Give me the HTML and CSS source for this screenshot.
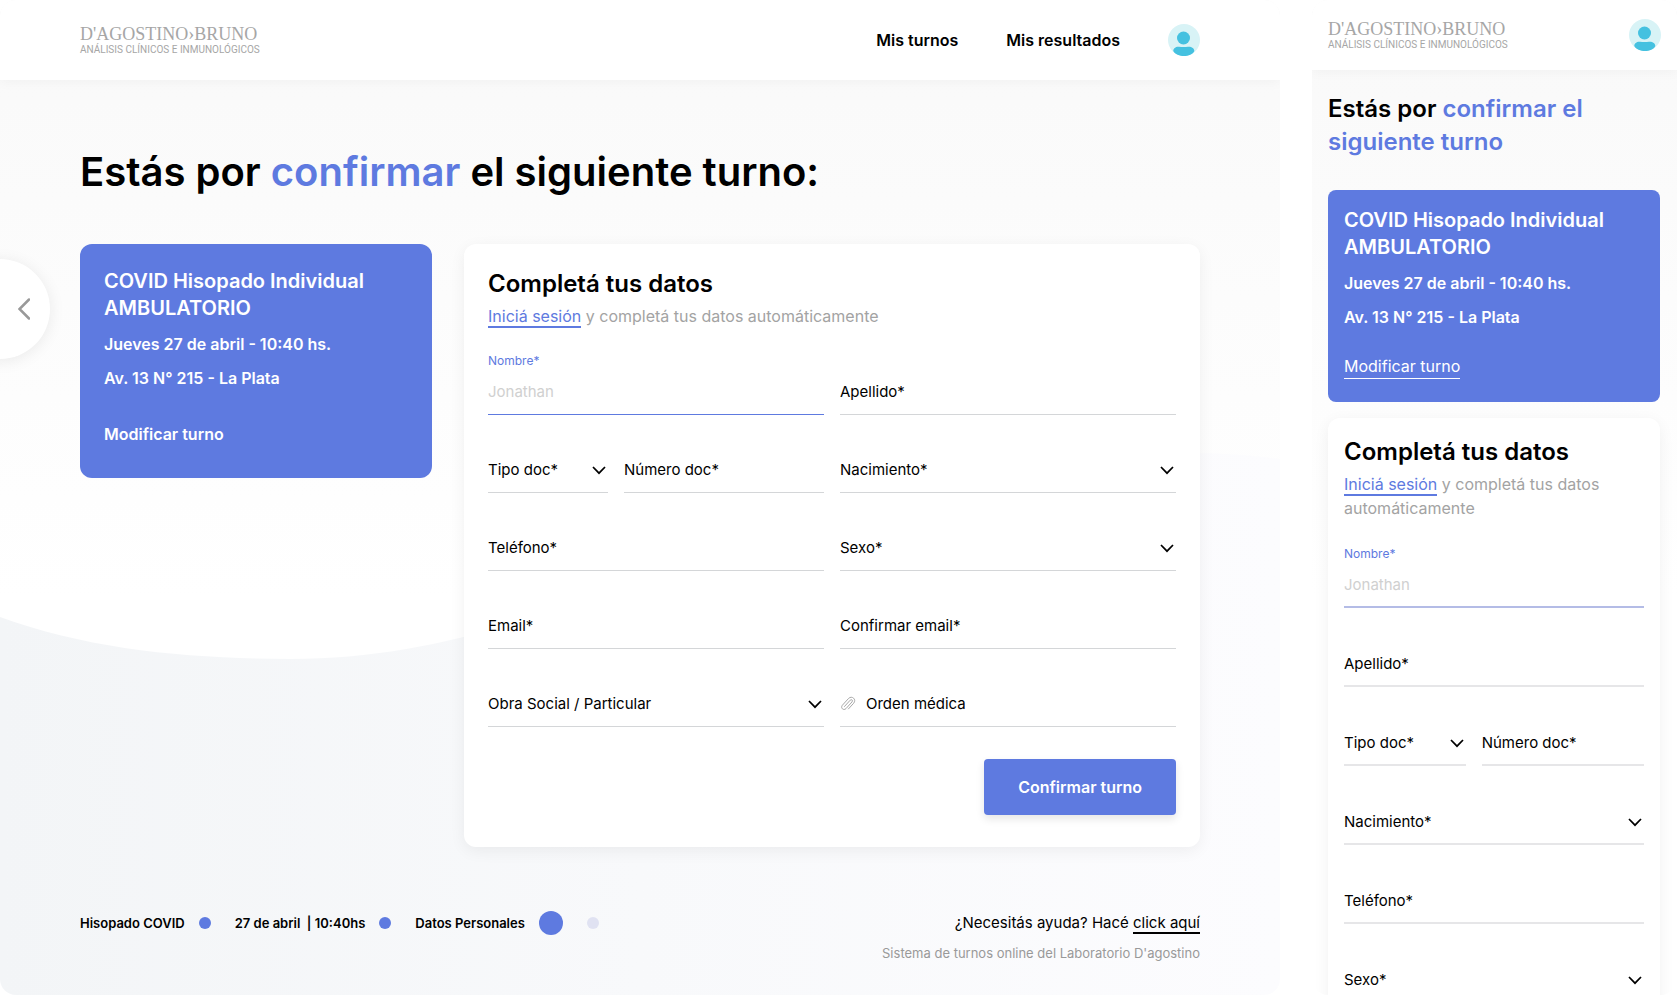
FILE: index.html
```html
<!DOCTYPE html>
<html lang="es">
<head>
  <meta charset="UTF-8">
  <meta name="viewport" content="width=device-width, initial-scale=1.0">
  <title>Confirmar turno</title>
  <link rel="stylesheet" href="styles.css">
</head>
<body>

<svg class="sprite" aria-hidden="true">
  <symbol id="chevron" viewBox="0 0 14 9">
    <path d="M1 1 L7 7.200 L13 1" fill="none" stroke="currentColor" stroke-width="1.700"/>
  </symbol>
  <symbol id="avatar" viewBox="0 0 32 32">
    <circle cx="16" cy="16" r="16" fill="#d8f3f6"/>
    <circle cx="15.500" cy="14" r="6.500" fill="#45c1e0"/>
    <path d="M5.300 27 C5.300 24 8 22.400 11 22.700 C14 23.100 17 23.100 20 22.700 C23.500 22.400 26.300 24 26.300 27 C25 30.500 20.500 32 16 32 C11.500 32 7 30.500 5.300 27 Z" fill="#45c1e0"/>
  </symbol>
  <symbol id="clip" viewBox="0 0 16 16">
    <path d="M4.200 10.800 L10.200 4.200 C11.600 2.800 13.300 4.400 12 5.900 L6 12.600 C3.600 15 0.200 12 2.300 9.300 L8.600 2.400 C12 -0.800 16.800 3.400 13.700 7.200 L8.200 13.200" fill="none" stroke="currentColor" stroke-width="1"/>
  </symbol>
</svg>

<div class="boards">

  <!-- Desktop -->
  <div class="board desktop">
    <svg class="wave" viewBox="0 0 1280 560" preserveAspectRatio="none" aria-hidden="true">
      <defs>
        <linearGradient id="waveFill" x1="0" y1="0" x2="1" y2="0">
          <stop offset="0" stop-color="#f3f5f7"/>
          <stop offset="0.5" stop-color="#f8f9fb"/>
          <stop offset="1" stop-color="#fcfcfe"/>
        </linearGradient>
      </defs>
      <path d="M0 180 C90 213 190 222 290 222 C600 222 760 15 1190 15 C1220 15 1250 17 1280 21 V560 H0 Z" fill="url(#waveFill)"/>
    </svg>

    <header class="header">
      <a href="#" class="logo">
        <span class="logo-name">D'AGOSTINO›BRUNO</span>
        <span class="logo-text">ANÁLISIS CLÍNICOS E INMUNOLÓGICOS</span>
      </a>
      <nav class="nav">
        <a href="#">Mis turnos</a>
        <a href="#">Mis resultados</a>
        <a href="#" class="avatar" aria-label="Mi cuenta"><svg><use href="#avatar"/></svg></a>
      </nav>
    </header>

    <button class="back" aria-label="Volver">
      <svg viewBox="0 0 12 22"><path d="M11 1.500 L1.500 11 L11 20.500" fill="none" stroke="#999" stroke-width="2.500" stroke-linecap="round"/></svg>
    </button>

    <main class="main">
      <h1>Estás por <span>confirmar</span> el siguiente turno:</h1>

      <div class="columns">
        <section class="turno">
          <h2>COVID Hisopado Individual AMBULATORIO</h2>
          <p>Jueves 27 de abril - 10:40 hs.</p>
          <p>Av. 13 N° 215 - La Plata</p>
          <a href="#">Modificar turno</a>
        </section>

        <section class="datos">
          <h2>Completá tus datos</h2>
          <p class="login"><a href="#">Iniciá sesión</a> y completá tus datos automáticamente</p>

          <form class="form">
            <div class="field active">
              <label for="nombre">Nombre*</label>
              <input type="text" id="nombre" placeholder="Jonathan">
            </div>
            <div class="field">
              <input type="text" placeholder="Apellido*" aria-label="Apellido">
            </div>
            <div class="doc">
              <div class="field select">
                <select aria-label="Tipo doc"><option>Tipo doc*</option></select>
                <svg><use href="#chevron"/></svg>
              </div>
              <div class="field">
                <input type="text" placeholder="Número doc*" aria-label="Número doc">
              </div>
            </div>
            <div class="field select">
              <select aria-label="Nacimiento"><option>Nacimiento*</option></select>
              <svg><use href="#chevron"/></svg>
            </div>
            <div class="field">
              <input type="tel" placeholder="Teléfono*" aria-label="Teléfono">
            </div>
            <div class="field select">
              <select aria-label="Sexo"><option>Sexo*</option></select>
              <svg><use href="#chevron"/></svg>
            </div>
            <div class="field">
              <input type="email" placeholder="Email*" aria-label="Email">
            </div>
            <div class="field">
              <input type="email" placeholder="Confirmar email*" aria-label="Confirmar email">
            </div>
            <div class="field select">
              <select aria-label="Obra Social / Particular"><option>Obra Social / Particular</option></select>
              <svg><use href="#chevron"/></svg>
            </div>
            <div class="field">
              <label class="file" for="orden"><svg><use href="#clip"/></svg>Orden médica</label>
              <input type="file" id="orden">
            </div>
            <button type="button" class="submit">Confirmar turno</button>
          </form>
        </section>
      </div>
    </main>

    <footer class="footer">
      <ol class="steps">
        <li>Hisopado COVID <i class="dot"></i></li>
        <li>27 de abril &nbsp;| 10:40hs <i class="dot"></i></li>
        <li>Datos Personales <i class="dot current"></i></li>
        <li><i class="dot next"></i></li>
      </ol>
      <div class="help">
        <p>¿Necesitás ayuda? Hacé <a href="#">click aquí</a></p>
        <small>Sistema de turnos online del Laboratorio D'agostino</small>
      </div>
    </footer>
  </div>

  <!-- Mobile -->
  <div class="board mobile">
    <header class="header">
      <a href="#" class="logo">
        <span class="logo-name">D'AGOSTINO›BRUNO</span>
        <span class="logo-text">ANÁLISIS CLÍNICOS E INMUNOLÓGICOS</span>
      </a>
      <a href="#" class="avatar" aria-label="Mi cuenta"><svg><use href="#avatar"/></svg></a>
    </header>

    <main class="main">
      <h1>Estás por <span>confirmar el siguiente turno</span></h1>

      <section class="turno">
        <h2>COVID Hisopado Individual AMBULATORIO</h2>
        <p>Jueves 27 de abril - 10:40 hs.</p>
        <p>Av. 13 N° 215 - La Plata</p>
        <a href="#">Modificar turno</a>
      </section>

      <section class="datos">
        <h2>Completá tus datos</h2>
        <p class="login"><a href="#">Iniciá sesión</a> y completá tus datos automáticamente</p>

        <form class="form">
          <div class="field active">
            <label for="nombre-m">Nombre*</label>
            <input type="text" id="nombre-m" placeholder="Jonathan">
          </div>
          <div class="field">
            <input type="text" placeholder="Apellido*" aria-label="Apellido">
          </div>
          <div class="doc">
            <div class="field select">
              <select aria-label="Tipo doc"><option>Tipo doc*</option></select>
              <svg><use href="#chevron"/></svg>
            </div>
            <div class="field">
              <input type="text" placeholder="Número doc*" aria-label="Número doc">
            </div>
          </div>
          <div class="field select">
            <select aria-label="Nacimiento"><option>Nacimiento*</option></select>
            <svg><use href="#chevron"/></svg>
          </div>
          <div class="field">
            <input type="tel" placeholder="Teléfono*" aria-label="Teléfono">
          </div>
          <div class="field select">
            <select aria-label="Sexo"><option>Sexo*</option></select>
            <svg><use href="#chevron"/></svg>
          </div>
        </form>
      </section>
    </main>
  </div>

</div>

</body>
</html>
```
FILE: styles.css
```css
* {
  box-sizing: border-box;
}

body {
  margin: 0;
  background: #fff;
  color: #000;
  font-family: Inter, "Open Sans", sans-serif;
  font-size: 16px;
  line-height: 24px;
}

h1, h2, p {
  margin: 0;
}

a {
  color: inherit;
  text-decoration: none;
}

.sprite {
  display: none;
}

.boards {
  display: grid;
  grid-template-columns: minmax(0, 1fr) 365px;
  gap: 32px;
  height: 100vh;
  overflow: hidden;
}

.board {
  position: relative;
  overflow: hidden;
  border-radius: 16px;
  background: linear-gradient(#f9f9f9, #fff 60%);
}

/* Header */
.header {
  position: relative;
  display: flex;
  justify-content: space-between;
  align-items: center;
  height: 80px;
  padding: 0 80px;
  background: #fff;
  box-shadow: 0 2px 12px rgba(0, 0, 0, 0.04);
}

.logo {
  display: flex;
  flex-direction: column;
  color: #a6a6a6;
}

.logo-name {
  font-family: "Liberation Serif", serif;
  font-size: 18px;
  line-height: 20px;
}

.logo-text {
  font-family: Roboto, sans-serif;
  font-size: 10px;
  line-height: 12px;
}

.nav {
  display: flex;
  align-items: center;
  gap: 48px;
  font-weight: 600;
}

.avatar, .avatar svg {
  display: block;
  width: 32px;
  height: 32px;
}

.back {
  position: absolute;
  left: -50px;
  top: 259px;
  width: 100px;
  height: 100px;
  padding: 0 20px 0 0;
  border: none;
  border-radius: 50%;
  background: #fff;
  box-shadow: 0 2px 16px rgba(0, 0, 0, 0.08);
  text-align: right;
  cursor: pointer;
}

.back svg {
  width: 12px;
  height: 22px;
  vertical-align: middle;
}

.wave {
  position: absolute;
  left: 0;
  bottom: 0;
  width: 100%;
  height: 56%;
}

/* Content */
.main {
  position: relative;
  padding: 64px 80px 0;
}

h1 {
  margin-bottom: 44px;
  font-size: 40px;
  font-weight: 600;
  line-height: 56px;
}

h1 span {
  color: #5e7ae0;
}

.columns {
  display: grid;
  grid-template-columns: 352px minmax(0, 1fr);
  align-items: start;
  gap: 32px;
}

.turno {
  padding: 24px 24px 32px;
  border-radius: 12px;
  background: #5e7ae0;
  color: #fff;
  font-weight: 600;
}

.turno h2 {
  font-size: 20px;
  font-weight: 600;
  line-height: 27px;
}

.turno p {
  margin-top: 10px;
}

.turno a {
  display: table;
  margin-top: 32px;
}

.datos {
  padding: 24px 24px 32px;
  border-radius: 12px;
  background: #fff;
  box-shadow: 0 4px 16px rgba(0, 0, 0, 0.06);
}

.datos h2 {
  margin-bottom: 4px;
  font-size: 24px;
  font-weight: 600;
  line-height: 32px;
}

.login {
  color: #a3a3a3;
}

.login a {
  border-bottom: 2px solid #5e7ae0;
  color: #5e7ae0;
}

/* Form */
.form {
  display: grid;
  grid-template-columns: 1fr 1fr;
  gap: 16px;
  margin-top: 25px;
}

.field {
  position: relative;
  display: flex;
  flex-direction: column;
  justify-content: flex-end;
  height: 62px;
}

.field label {
  color: #5e7ae0;
  font-size: 12px;
  line-height: 16px;
}

.field input, .field select, .field .file {
  width: 100%;
  height: 46px;
  padding: 0;
  border: none;
  border-bottom: 1px solid #d4d6d8;
  border-radius: 0;
  background: none;
  color: #000;
  font-family: inherit;
  font-size: 15px;
  outline: none;
  appearance: none;
}

.field input::placeholder {
  color: #000;
  opacity: 1;
}

.field.active input {
  border-color: #5e7ae0;
}

.field.active input::placeholder {
  color: #d0d0d0;
}

.select svg {
  position: absolute;
  right: 2px;
  bottom: 18px;
  width: 14px;
  height: 9px;
  pointer-events: none;
}

.field .file {
  display: flex;
  align-items: center;
  gap: 10px;
}

.file svg {
  width: 16px;
  height: 16px;
  color: #a8a8a8;
}

.field input[type="file"] {
  position: absolute;
  width: 1px;
  height: 1px;
  opacity: 0;
}

.doc {
  display: grid;
  grid-template-columns: 3fr 5fr;
  gap: 16px;
}

.submit {
  grid-column: 2;
  justify-self: end;
  height: 56px;
  margin-top: 16px;
  padding: 0 34px;
  border: none;
  border-radius: 4px;
  background: #5e7ae0;
  box-shadow: 0 4px 8px rgba(0, 0, 0, 0.1);
  color: #fff;
  font: inherit;
  font-weight: 600;
  cursor: pointer;
}

/* Footer */
.footer {
  position: relative;
  display: flex;
  justify-content: space-between;
  padding: 64px 80px 32px;
}

.steps {
  display: flex;
  gap: 24px;
  margin: 0;
  padding: 0;
  list-style: none;
  font-size: 13px;
  font-weight: 600;
}

.steps li {
  display: flex;
  align-items: center;
  gap: 14px;
  height: 24px;
}

.dot {
  width: 12px;
  height: 12px;
  border-radius: 50%;
  background: #5e7ae0;
}

.dot.current {
  width: 24px;
  height: 24px;
}

.dot.next {
  background: #e0e2f2;
}

.help {
  font-size: 15px;
  text-align: right;
}

.help a {
  border-bottom: 2px solid #000;
}

.help small {
  display: block;
  margin-top: 8px;
  color: #999;
  font-size: 13px;
  line-height: 20px;
}

/* Mobile */
.mobile .header {
  height: 70px;
  padding: 0 16px;
}

.mobile .main {
  padding: 22px 17px 0 16px;
}

.mobile h1 {
  margin-bottom: 32px;
  font-size: 24px;
  line-height: 33px;
}

.mobile .turno {
  padding: 17px 16px 23px;
  border-radius: 8px;
}

.mobile .turno a {
  margin-top: 26px;
  border-bottom: 1px solid #fff;
  font-weight: 400;
  line-height: 23px;
}

.mobile .datos {
  margin-top: 16px;
  padding: 18px 16px;
}

.mobile .form {
  grid-template-columns: 1fr;
  gap: 17px;
  margin-top: 26px;
}

.mobile .doc {
  grid-template-columns: 3fr 4fr;
}

.mobile .field input, .mobile .field select {
  border-bottom: 2px solid #e6e6e8;
}

.mobile .field.active input {
  border-color: #b4bce6;
}
```
